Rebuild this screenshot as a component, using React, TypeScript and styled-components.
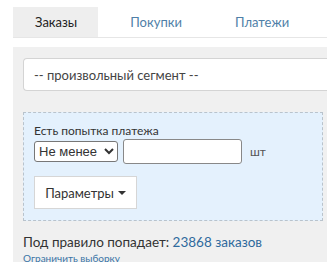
import React, { useState } from 'react';
import styled, { createGlobalStyle } from 'styled-components';

const GlobalStyle = createGlobalStyle`
  body {
    margin: 0;
    background: #fff;
    font-family: Lato, 'Noto Sans', sans-serif;
    color: #333;
    overflow: hidden;
  }
`;

const Page = styled.main`
  padding: 7px 0 0 13px;
  width: 327px;
  box-sizing: border-box;
`;

const Tabs = styled.nav`
  display: flex;
  border-bottom: 1px solid #e6e6e6;
  height: 30px;
`;

const Tab = styled.a<{ $active?: boolean }>`
  display: flex;
  align-items: center;
  padding: 0 21px 0 22px;
  margin-right: 10px;
  font-size: 13px;
  background: ${(p) => (p.$active ? '#eeeeee' : 'transparent')};
  color: ${(p) => (p.$active ? '#222' : '#4f7fa8')};
  cursor: pointer;
`;

const Panel = styled.section`
  margin-top: 9px;
  background: #f0f0f0;
  padding: 11px 0 20px 10px;
  min-height: 220px;
`;

const SegmentBox = styled.div`
  height: 33px;
  box-sizing: border-box;
  border: 1px solid #d4d4d4;
  border-right: none;
  border-radius: 4px 0 0 4px;
  background: #fff;
  display: flex;
  align-items: center;
  padding-left: 10px;
  font-size: 13px;
  color: #444;
`;

const Condition = styled.div`
  margin-top: 21px;
  margin-right: 4px;
  border: 1px dashed #b9c3cc;
  background: #e4f1fd;
  padding: 10px 10px 11px 10px;
`;

const Label = styled.div`
  font-size: 12px;
  color: #333;
  line-height: 15px;
`;

const Row = styled.div`
  display: flex;
  align-items: center;
  margin-top: 1px;
`;

const Select = styled.select`
  width: 84px;
  height: 21px;
  font-family: 'Liberation Sans', Arial, sans-serif;
  font-size: 13px;
  color: #333;
  border: 1px solid #777;
  border-radius: 3px;
  background: #fff;
  padding: 0;
`;

const NumberInput = styled.input`
  margin-left: 5px;
  width: 119px;
  height: 25px;
  box-sizing: border-box;
  border: 1px solid #888;
  border-radius: 3px;
  background: #fff;
`;

const Unit = styled.span`
  margin-left: 8px;
  font-size: 12px;
  color: #555;
`;

const ParamsButton = styled.button`
  margin-top: 12px;
  width: 103px;
  height: 33px;
  background: #fff;
  border: 1px solid #d6d6d6;
  font-family: inherit;
  font-size: 13px;
  color: #333;
  display: flex;
  align-items: center;
  justify-content: center;
  gap: 4px;
`;

const Caret = styled.span`
  display: inline-block;
  width: 0;
  height: 0;
  border-left: 4px solid transparent;
  border-right: 4px solid transparent;
  border-top: 4px solid #333;
`;

const Summary = styled.div`
  margin-top: 13px;
  font-size: 13.5px;
  line-height: 16px;
  color: #333;
`;

const Count = styled.a`
  color: #2f6a9d;
`;

const Limit = styled.a`
  display: block;
  margin-top: 2px;
  font-size: 10px;
  line-height: 12px;
  color: #3a74a6;
`;

export default function App() {
  const [mode, setMode] = useState('gte');
  return (
    <Page>
      <GlobalStyle />
      <Tabs>
        <Tab $active>Заказы</Tab>
        <Tab>Покупки</Tab>
        <Tab>Платежи</Tab>
      </Tabs>
      <Panel>
        <SegmentBox>-- произвольный сегмент --</SegmentBox>
        <Condition>
          <Label>Есть попытка платежа</Label>
          <Row>
            <Select value={mode} onChange={(e) => setMode(e.target.value)}>
              <option value="gte">Не менее</option>
              <option value="lte">Не более</option>
            </Select>
            <NumberInput type="text" />
            <Unit>шт</Unit>
          </Row>
          <ParamsButton>
            Параметры <Caret />
          </ParamsButton>
        </Condition>
        <Summary>
          Под правило попадает: <Count>23868 заказов</Count>
        </Summary>
        <Limit>Ограничить выборку</Limit>
      </Panel>
    </Page>
  );
}
